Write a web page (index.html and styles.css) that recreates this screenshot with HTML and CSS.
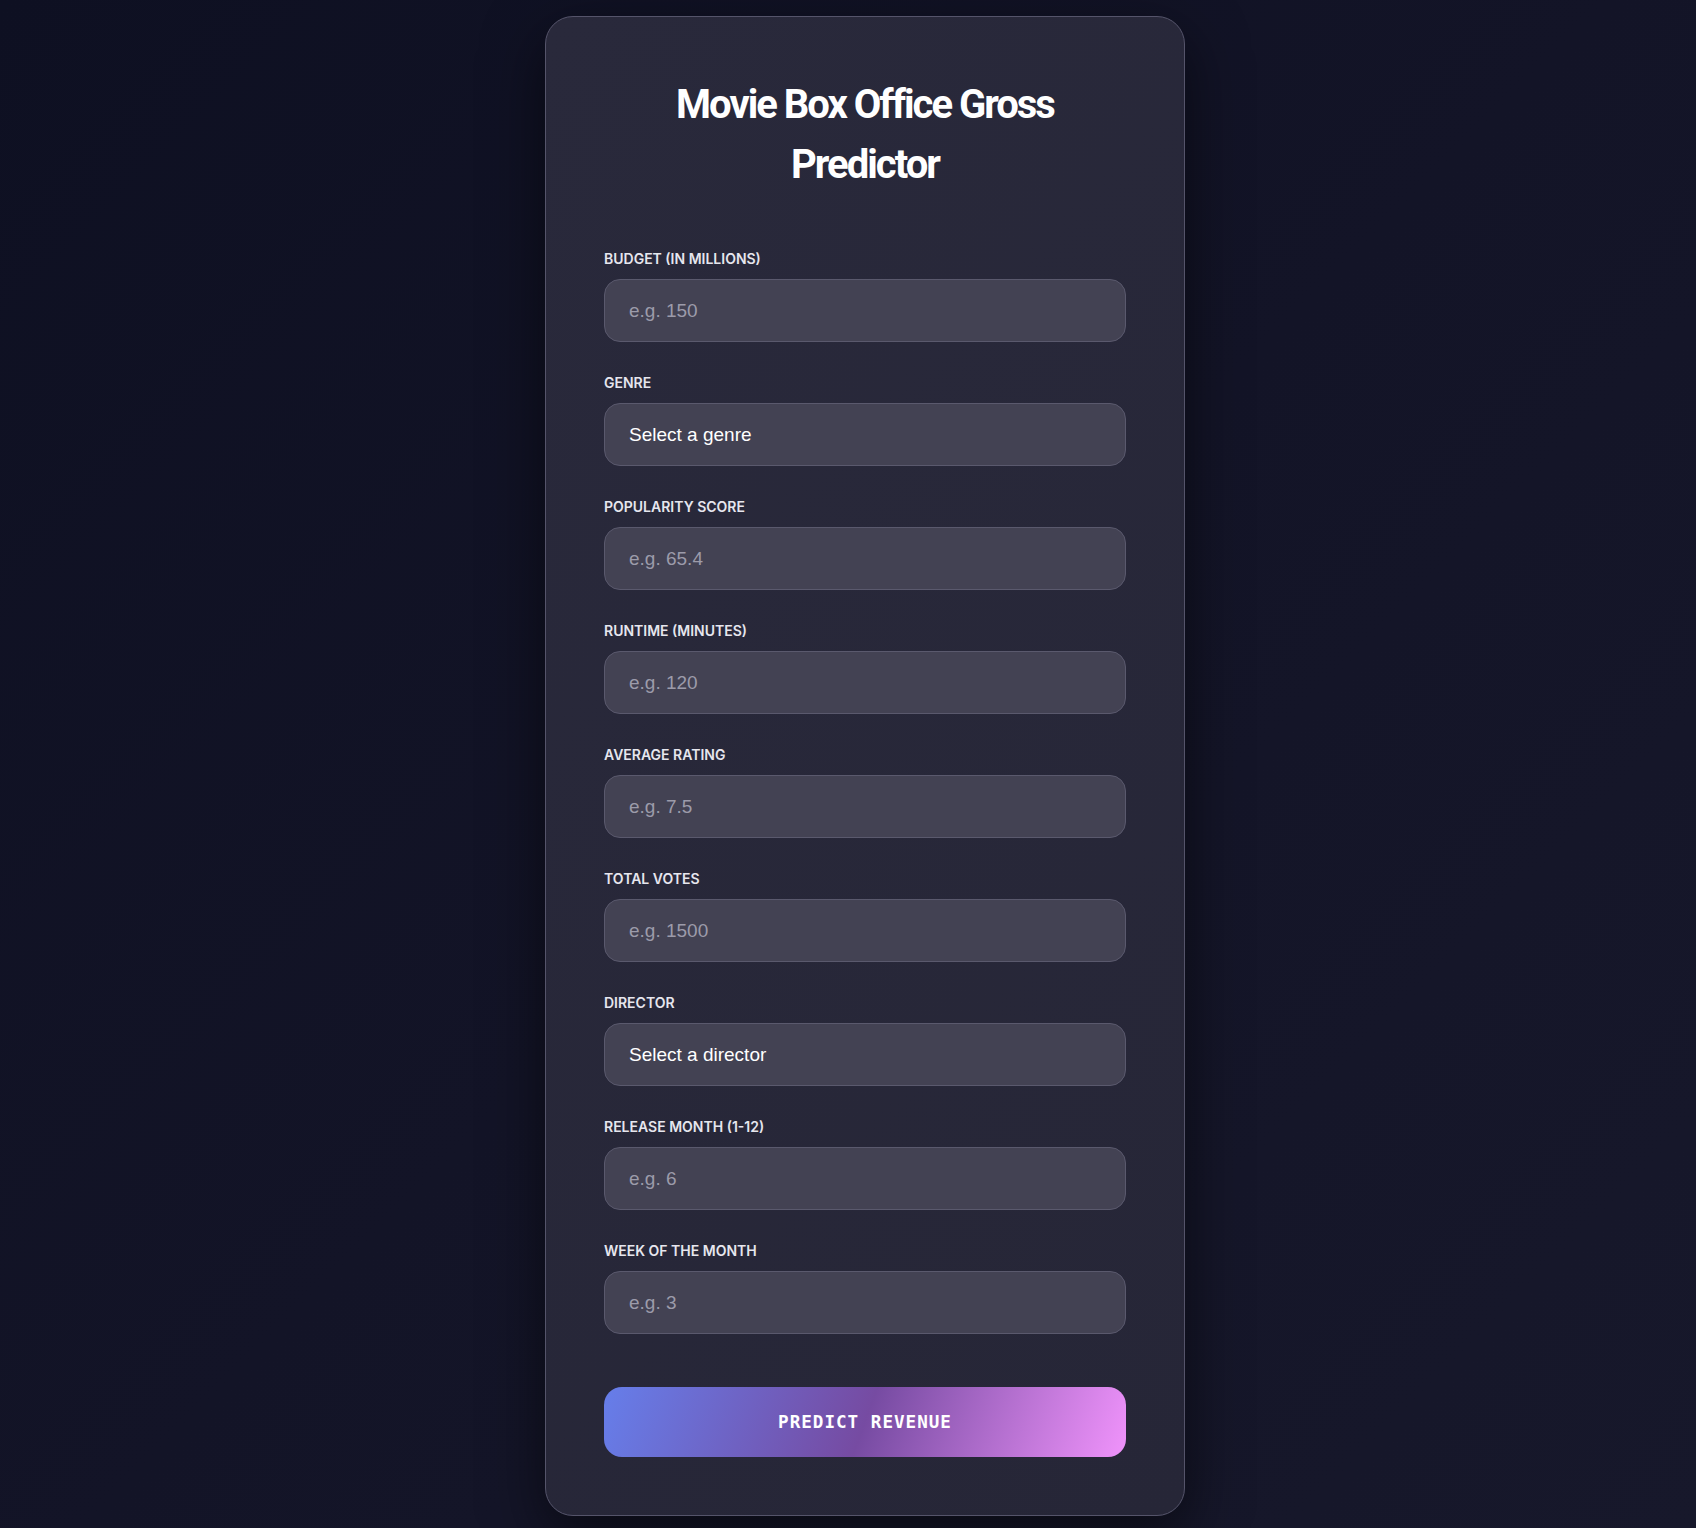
FILE: index.html
```html
<!DOCTYPE html>
<html lang="en">
<head>
<meta charset="utf-8">
<title>Movie Box Office Gross Predictor</title>
<link rel="stylesheet" href="styles.css">
</head>
<body>
<main class="page">
  <section class="card">
    <h1 class="title">Movie Box Office Gross Predictor</h1>
    <form class="form">
      <div class="field">
        <label class="label" for="budget">Budget (in millions)</label>
        <input class="control" id="budget" type="text" placeholder="e.g. 150">
      </div>
      <div class="field">
        <label class="label" for="genre">Genre</label>
        <select class="control select" id="genre">
          <option>Select a genre</option>
        </select>
      </div>
      <div class="field">
        <label class="label" for="popularity">Popularity Score</label>
        <input class="control" id="popularity" type="text" placeholder="e.g. 65.4">
      </div>
      <div class="field">
        <label class="label" for="runtime">Runtime (minutes)</label>
        <input class="control" id="runtime" type="text" placeholder="e.g. 120">
      </div>
      <div class="field">
        <label class="label" for="rating">Average Rating</label>
        <input class="control" id="rating" type="text" placeholder="e.g. 7.5">
      </div>
      <div class="field">
        <label class="label" for="votes">Total Votes</label>
        <input class="control" id="votes" type="text" placeholder="e.g. 1500">
      </div>
      <div class="field">
        <label class="label" for="director">Director</label>
        <select class="control select" id="director">
          <option>Select a director</option>
        </select>
      </div>
      <div class="field">
        <label class="label" for="month">Release Month (1-12)</label>
        <input class="control" id="month" type="text" placeholder="e.g. 6">
      </div>
      <div class="field">
        <label class="label" for="week">Week of the Month</label>
        <input class="control" id="week" type="text" placeholder="e.g. 3">
      </div>
      <button class="submit" type="button">Predict Revenue</button>
    </form>
  </section>
</main>
</body>
</html>
```
FILE: styles.css
```css
* { box-sizing: border-box; }
html, body { margin: 0; padding: 0; }
body {
  min-height: 1528px;
  background: linear-gradient(135deg, #0e1022 0%, #131427 50%, #17182b 100%);
  font-family: "Inter", "Liberation Sans", sans-serif;
  color: #fff;
}
.page {
  display: flex;
  justify-content: center;
  padding: 16px 0 12px 34px;
}
.card {
  width: 640px;
  padding: 58px;
  border: 1px solid #55546a;
  border-radius: 28px;
  background: linear-gradient(135deg, #29293b 0%, #262637 100%);
  box-shadow: 0 20px 60px rgba(0, 0, 0, 0.55);
}
.title {
  margin: 0 0 55px;
  font-family: "Roboto", "Liberation Sans", sans-serif;
  font-weight: 700;
  font-size: 40px;
  line-height: 60px;
  letter-spacing: -2px;
  text-align: center;
  color: #fff;
}
.form { display: flex; flex-direction: column; margin: 0; }
.field { display: flex; flex-direction: column; margin-bottom: 32px; }
.label {
  margin-bottom: 12px;
  font-size: 14px;
  font-weight: 600;
  line-height: 17px;
  text-transform: uppercase;
  color: #e6e6ee;
}
.control {
  height: 63px;
  width: 100%;
  padding: 0 24px;
  border: 1px solid #5a596d;
  border-radius: 16px;
  background: #434253;
  font-family: "Liberation Sans", Arial, sans-serif;
  font-size: 19px;
  color: #fff;
  outline: none;
}
.control::placeholder { color: #9c9baa; }
.select {
  appearance: none;
  -webkit-appearance: none;
}
.submit {
  margin-top: 21px;
  height: 70px;
  width: 100%;
  border: 0;
  border-radius: 18px;
  background: linear-gradient(110deg, #667eea 0%, #764ba2 50%, #f093fb 100%);
  font-family: "DejaVu Sans Mono", monospace;
  font-weight: 700;
  font-size: 17.6px;
  letter-spacing: 1px;
  text-transform: uppercase;
  color: #fff;
}
```
